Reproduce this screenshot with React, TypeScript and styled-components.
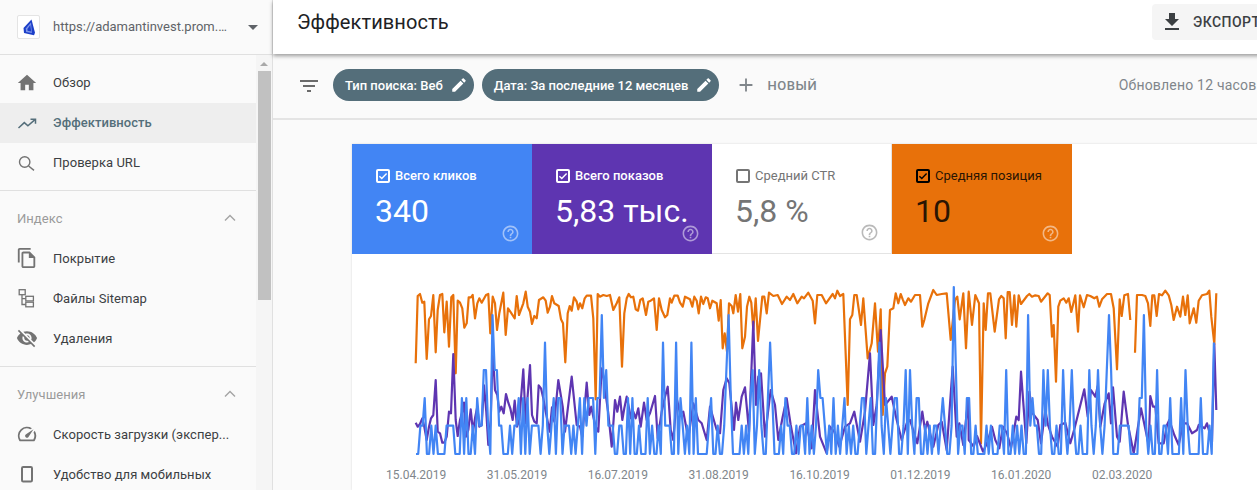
import React from "react";
import styled, { createGlobalStyle } from "styled-components";

const Global = createGlobalStyle`
  html, body { margin: 0; padding: 0; background: #fff; overflow: hidden; }
  body { font-family: Roboto, "Liberation Sans", sans-serif; }
`;

const Page = styled.div`
  display: flex;
  width: 1257px;
  height: 490px;
  overflow: hidden;
`;

/* ---------- sidebar ---------- */
const Sidebar = styled.aside`
  flex: 0 0 272px;
  width: 272px;
  height: 490px;
  display: flex;
  flex-direction: column;
  background: #fafafa;
  border-right: 1px solid #e0e0e0;
`;
const SiteHeader = styled.div`
  flex: 0 0 54px;
  height: 54px;
  display: flex;
  align-items: center;
  padding-left: 17px;
  border-bottom: 1px solid #e0e0e0;
`;
const LogoBox = styled.div`
  width: 21px;
  height: 22px;
  margin-right: 13px;
  display: flex;
  align-items: center;
  justify-content: center;
  background: #fff;
  border: 1px solid #e4e4e4;
  border-radius: 2px;
`;
const SiteName = styled.div`
  width: 175px;
  font-size: 13px;
  line-height: 18px;
  color: #5f6368;
  white-space: nowrap;
  overflow: hidden;
  text-overflow: ellipsis;
`;
const Caret = styled.div`
  width: 0;
  height: 0;
  margin-left: 20px;
  border-left: 5px solid transparent;
  border-right: 5px solid transparent;
  border-top: 5px solid #5f6368;
`;
const SideBody = styled.div`
  flex: 1;
  display: flex;
  min-height: 0;
`;
const Nav = styled.nav`
  flex: 0 0 256px;
  width: 256px;
  padding-top: 8px;
  overflow: hidden;
`;
const NavItem = styled.div<{ $active?: boolean }>`
  height: 40px;
  display: flex;
  align-items: center;
  padding-left: 16px;
  gap: 15px;
  font-size: 13px;
  letter-spacing: 0.05px;
  white-space: nowrap;
  color: ${(p) => (p.$active ? "#546e7a" : "#3c4043")};
  font-weight: ${(p) => (p.$active ? 500 : 400)};
  background: ${(p) => (p.$active ? "#eeeeee" : "transparent")};
  svg { flex: 0 0 22px; color: ${(p) => (p.$active ? "#546e7a" : "#737373")}; }
`;
const NavLabel = styled.span``;
const PrimaryGroup = styled.div`
  ${NavLabel} { margin-top: -2px; }
`;
const Divider = styled.div<{ $gap: number }>`
  height: 1px;
  margin-top: ${(p) => p.$gap}px;
  background: #e0e0e0;
`;
const SectionTitle = styled.div`
  height: 54px;
  display: flex;
  align-items: center;
  justify-content: space-between;
  padding: 0 20px 0 17px;
  box-sizing: border-box;
  font-size: 13px;
  letter-spacing: 0.05px;
  color: #9a9a9a;
  margin-bottom: -7px;
`;
const ScrollTrack = styled.div`
  flex: 0 0 16px;
  width: 16px;
  background: #f5f5f5;
  display: flex;
  flex-direction: column;
  align-items: center;
`;
const ScrollArrow = styled.div`
  width: 0;
  height: 0;
  margin-top: 7px;
  border-left: 4px solid transparent;
  border-right: 4px solid transparent;
  border-bottom: 4px solid #a8a8a8;
`;
const ScrollThumb = styled.div`
  width: 13px;
  height: 229px;
  margin-top: 5px;
  background: #c1c1c1;
`;

/* ---------- main ---------- */
const Main = styled.main`
  flex: 0 0 1040px;
  width: 1040px;
  display: flex;
  flex-direction: column;
  background: #fafafa;
`;
const TopBar = styled.header`
  position: relative;
  z-index: 2;
  flex: 0 0 54px;
  height: 54px;
  display: flex;
  align-items: center;
  justify-content: space-between;
  box-sizing: border-box;
  padding: 0 24px 10px;
  background: #fff;
  box-shadow: 0 2px 4px rgba(0, 0, 0, 0.38);
`;
const Title = styled.h1`
  margin: 0;
  font-size: 20px;
  font-weight: 400;
  color: #202124;
  letter-spacing: 0.1px;
`;
const ExportButton = styled.button`
  width: 137px;
  height: 36px;
  display: flex;
  align-items: center;
  gap: 9px;
  padding: 0 0 0 8px;
  border: 0;
  border-radius: 4px;
  background: #f5f5f5;
  color: #3c4043;
  font-family: inherit;
  font-size: 14px;
  font-weight: 500;
  letter-spacing: 0.45px;
`;
const FilterBar = styled.div`
  flex: 0 0 66px;
  height: 66px;
  display: flex;
  align-items: center;
  box-sizing: border-box;
  padding-left: 24px;
  border-bottom: 2px solid #e4e4e4;
  color: #6b6b6b;
`;
const FilterIcon = styled.div`
  width: 24px;
  height: 24px;
  margin-right: 12px;
  margin-top: -1px;
  color: #6b6b6b;
`;
const Chip = styled.div`
  height: 32px;
  display: flex;
  align-items: center;
  gap: 7px;
  box-sizing: border-box;
  padding: 0 6px 0 12px;
  margin-right: 8px;
  margin-top: -2px;
  border-radius: 16px;
  background: #546e7a;
  color: #fff;
  font-size: 13px;
  font-weight: 500;
  white-space: nowrap;
`;
const NewFilter = styled.div`
  display: flex;
  align-items: center;
  gap: 10px;
  margin-left: 8px;
  margin-top: -2px;
  font-size: 13px;
  font-weight: 500;
  letter-spacing: 0.6px;
  color: #80868b;
`;
const Updated = styled.div`
  margin-left: auto;
  margin-right: 13px;
  margin-top: -2px;
  font-size: 14px;
  letter-spacing: 0.2px;
  color: #80868b;
  white-space: nowrap;
`;
const Content = styled.div`
  flex: 1;
  padding: 24px 0 0 79px;
`;
const Card = styled.section`
  background: #fff;
  box-shadow: 0 0 2px rgba(0, 0, 0, 0.14);
  height: 100%;
`;
const Tiles = styled.div`
  display: flex;
  height: 110px;
`;
const Tile = styled.div<{ $bg: string; $fg: string; $light?: boolean }>`
  position: relative;
  flex: 0 0 180px;
  width: 180px;
  height: 110px;
  box-sizing: border-box;
  padding: 23px 0 0 24px;
  background: ${(p) => p.$bg};
  color: ${(p) => p.$fg};
  border-bottom: ${(p) => (p.$light ? "1px solid #e4e4e4" : "0")};
  border-right: ${(p) => (p.$light ? "1px solid #e4e4e4" : "0")};
`;
const TileHead = styled.div`
  display: flex;
  align-items: center;
  gap: 5px;
  height: 16px;
  font-size: 13px;
  font-weight: 500;
  white-space: nowrap;
  svg { margin-top: 2px; }
`;
const TileHeadLight = styled(TileHead)`
  font-weight: 400;
`;
const TileValue = styled.div`
  margin: 9px 0 0 -1px;
  font-size: 32px;
  line-height: 38px;
  font-weight: 400;
  white-space: nowrap;
`;
const HelpIcon = styled.div<{ $color?: string }>`
  position: absolute;
  right: 12px;
  bottom: 11px;
  width: 19px;
  height: 19px;
  opacity: 0.5;
  color: ${(p) => p.$color || "inherit"};
`;
const ChartFrame = styled.div`
  display: block;
  height: 206px;
`;
const Axis = styled.div`
  display: flex;
  padding-left: 34px;
  height: 30px;
  align-items: center;
`;
const Tick = styled.div`
  flex: 0 0 100.85px;
  font-size: 12px;
  color: #80868b;
  white-space: nowrap;
`;

/* ---------- icons ---------- */
const Icon = ({ d, size = 22 }: { d: string; size?: number }) => (
  <svg width={size} height={size} viewBox="0 0 24 24" fill="currentColor">
    <path d={d} />
  </svg>
);
const P = {
  home: "M10 20v-6h4v6h5v-8h3L12 3 2 12h3v8z",
  copy: "M16 1H4c-1.1 0-2 .9-2 2v14h2V3h12V1zm-1 4H8c-1.1 0-1.99.9-1.99 2L6 21c0 1.1.89 2 1.99 2H19c1.1 0 2-.9 2-2V11l-6-6zM8 21V7h6v5h5v9H8z",
  eyeOff:
    "M12 7c2.76 0 5 2.24 5 5 0 .65-.13 1.26-.36 1.83l2.92 2.92c1.51-1.26 2.7-2.89 3.43-4.75-1.73-4.39-6-7.5-11-7.5-1.4 0-2.74.25-3.98.7l2.16 2.16C10.74 7.13 11.35 7 12 7zM2 4.27l2.28 2.28.46.46C3.08 8.3 1.78 10.02 1 12c1.73 4.39 6 7.5 11 7.5 1.55 0 3.03-.3 4.38-.84l.42.42L19.73 22 21 20.73 3.27 3 2 4.27zM7.53 9.8l1.55 1.55c-.05.21-.08.43-.08.65 0 1.66 1.34 3 3 3 .22 0 .44-.03.65-.08l1.55 1.55c-.67.33-1.41.53-2.2.53-2.76 0-5-2.24-5-5 0-.79.2-1.53.53-2.2zm4.31-.78l3.15 3.15.02-.16c0-1.66-1.34-3-3-3l-.17.01z",
  speed:
    "M20.38 8.57l-1.23 1.85a8 8 0 0 1-.22 7.58H5.07A8 8 0 0 1 15.58 6.85l1.85-1.23A10 10 0 0 0 3.35 19a2 2 0 0 0 1.72 1h13.85a2 2 0 0 0 1.74-1 10 10 0 0 0-.27-10.44zm-9.79 6.84a2 2 0 0 0 2.83 0l5.66-8.49-8.49 5.66a2 2 0 0 0 0 2.83z",
  pencil:
    "M3 17.25V21h3.75L17.81 9.94l-3.75-3.75L3 17.25zM20.71 7.04c.39-.39.39-1.02 0-1.41l-2.34-2.34c-.39-.39-1.02-.39-1.41 0l-1.83 1.83 3.75 3.75 1.83-1.83z",
  filter: "M10 18h4v-2h-4v2zM3 6v2h18V6H3zm3 7h12v-2H6v2z",
  add: "M19 13h-6v6h-2v-6H5v-2h6V5h2v6h6v2z",
  download: "M19 9h-4V3H9v6H5l7 7 7-7zM5 18v2h14v-2H5z",
  help: "M11 18h2v-2h-2v2zm1-16C6.48 2 2 6.48 2 12s4.48 10 10 10 10-4.48 10-10S17.52 2 12 2zm0 18c-4.41 0-8-3.59-8-8s3.59-8 8-8 8 3.59 8 8-3.59 8-8 8zm0-14c-2.21 0-4 1.79-4 4h2c0-1.1.9-2 2-2s2 .9 2 2c0 2-3 1.75-3 5h2c0-2.25 3-2.5 3-5 0-2.21-1.79-4-4-4z",
};

const TrendIcon = () => (
  <svg width="22" height="22" viewBox="0 0 22 22" fill="none" stroke="currentColor" strokeWidth="1.5">
    <path d="M2.5 16l5.8-5.4 3.6 3.2L19 7.6" />
    <path d="M14.5 7.2h5v4.6" />
  </svg>
);
const SearchIcon = () => (
  <svg width="22" height="22" viewBox="0 0 22 22" fill="none" stroke="currentColor" strokeWidth="1.4">
    <circle cx="8.7" cy="10" r="5.2" />
    <path d="M12.6 14l5.4 4.4" />
  </svg>
);
const SitemapIcon = () => (
  <svg width="22" height="22" viewBox="0 0 22 22" fill="none" stroke="currentColor" strokeWidth="1.3">
    <rect x="3.2" y="2.7" width="6" height="5" />
    <rect x="9.8" y="9.3" width="7.6" height="4.6" />
    <rect x="9.8" y="15.2" width="7.6" height="4.6" />
    <path d="M6 8v9.5h3.8M6 11.6h3.8" />
  </svg>
);
const PhoneIcon = () => (
  <svg width="22" height="22" viewBox="0 0 22 22" fill="none" stroke="currentColor" strokeWidth="2">
    <rect x="6" y="4" width="10" height="14.5" rx="1.2" />
  </svg>
);
const Chevron = () => (
  <svg width="12" height="8" viewBox="0 0 12 8" fill="none" stroke="#a3a3a3" strokeWidth="1.4">
    <path d="M1 6.5l5-5 5 5" />
  </svg>
);
const Logo = () => (
  <svg width="14" height="17" viewBox="0 0 14 17">
    <path d="M9.5 0.5L1.5 9l.5 5 10 2.2 1-2.5z" fill="#1c3fc8" />
    <path d="M9 3.5L3.8 9.5l.3 3.4 5.8 1.2z" fill="#7d95ea" />
    <path d="M8.3 6L5.4 10l.2 1.7 3.6.8z" fill="#1c3fc8" />
  </svg>
);
const Check = ({ color, checked }: { color: string; checked: boolean }) => (
  <svg width="14" height="14" viewBox="0 0 14 14" fill="none">
    <rect x="1" y="1" width="12" height="12" rx="1" stroke={color} strokeWidth="2" />
    {checked && <path d="M3.4 7.2l2.4 2.4 4.8-5" stroke={color} strokeWidth="1.4" />}
  </svg>
);

/* ---------- chart data: points read off the reference, as crop-space pairs ---------- */
type Pt = [number, number];
const crop = (ox: number, raw: number[]): Pt[] => {
  const out: Pt[] = [];
  for (let i = 0; i < raw.length; i += 2) out.push([ox + raw[i] / 3 - 352, 26 + raw[i + 1] / 3]);
  return out;
};
const orangeA = [
  ...crop(380, [107,250,113,48,120,42,127,68,133,65,140,237,147,118,153,108,160,45,167,217,173,90,180,45,187,42,193,157,200,65,207,200,214,52,220,45,227,280,233,62,240,68,247,85,253,143,260,130,266,52,273,52,278,45,285,115,292,70,298,55,305,68,318,45,325,42,331,160,338,50,345,70,351,150,358,100,370,38,377,165,384,85,391,95,404,115,410,48,417,105,430,70,437,35,443,80,450,95,456,132,463,108,470,115,477,60,490,52,497,62,503,98,510,80,516,48,523,70,536,78,543,118,549,130,556,247,563,100,569,78,575,92,582,52,590,65,595,88,600,70,607,85,614,55,620,47,633,47,640,115,647,358,653,42,660,50,670,45,680,48,690,45,700,90,710,70,718,52,726,260,733,100,740,55,746,42,753,52,760,50,767,88,774,92,781,60,788,55,798,105,805,65,812,62,822,55,830,150,837,55,845,90,855,112,862,105,870,55,875,68,883,47,893,47,900,68]),
  ...crop(680, [8,80,15,50,30,58,37,80,43,50,50,62,56,100,63,50,70,72,77,52,83,55,90,85,97,62,110,70,116,122,122,60,128,205,134,160,141,215,147,70,155,78,160,100,167,45,174,95,181,42,187,205,195,170,201,80,208,50,214,68,220,150,227,55,234,183,247,50,253,50,260,100,267,38,280,48,293,45,306,72,320,50,330,60,340,42,352,70,365,50,372,55,385,38,398,62,405,130,412,45,425,45,438,70,458,42,465,55,472,32,480,48,490,42,503,375,510,118,517,105,523,45,530,45,543,135,550,55,563,235,575,190,585,70,594,215,602,88,608,405,615,280,622,260,630,90,640,85,647,40,655,70,662,42,668,58,675,75,685,55,693,65,705,45,720,45,727,140,733,120,745,70,760,30,770,45,785,42,800,40,812,180,825,60,832,50,839,118,850,40,858,205,866,35]),
  ...crop(967, [15,135,25,45,36,70,42,490,50,70,56,150,63,40,70,40,83,155,96,58,103,48,110,55,116,175,122,36,128,36,135,135,142,46,148,140,155,46,162,72,180,48,187,42,195,50,205,46,215,48,222,65,242,40,248,45,255,170,260,135,267,305,274,80,280,62,290,55,298,68,305,55,313,96,325,46,333,155,339,46,350,82,360,45,370,48,382,55,390,50,397,80,405,58,420,42,432,42,440,85,450,268,458,58,464,108,472,46,483,42,490,120]),
];
const orangeB = crop(967, [504,218,510,45,525,45,535,48,543,70,550,138,556,46,562,46,569,108,576,42,585,46,595,32,605,46,613,75,620,120,630,80,640,110,648,50,655,105,662,46,668,130,680,85,688,128,695,62,705,46,720,42,727,32,733,110,742,192,748,40]);
const purple = [
  ...crop(380, [107,428,113,440,120,432,127,415,133,440,140,480,147,440,153,415,160,405,167,300,173,455,180,460,187,488,193,488,200,470,207,395,213,400,220,222,227,420,233,468,240,420,247,395,252,368,258,470,265,450,272,388,279,455,285,415,292,380,298,440,305,435,312,316,319,395,325,495,332,420,338,210,345,330,352,345,358,395,364,380,371,400,378,342,385,368,391,385,398,420,404,362,411,440,418,420,430,268,437,430,443,345,450,255,456,405,463,425,470,430,476,316,483,325,490,355,497,395,509,455,516,382,523,425,535,300,548,380,555,455,575,290,590,435,600,440,607,470,620,308,628,405,634,380,640,410,647,440,655,455,665,265,672,300,678,350,685,400,695,500,705,360,712,395,720,350,727,420,733,385,740,350,753,415,760,395,767,415,775,385,782,440,792,368,800,420,810,400,825,348,833,475,845,395,855,350,863,320,872,450,880,480,890,355,900,400]),
  ...crop(680, [10,395,25,475,40,370,55,420,65,430,80,480,90,380,110,450,120,460,130,330,140,295,148,310,162,450,168,368,175,420,185,350,195,322,207,455,220,125,228,375,235,290,243,280,255,470,272,330,285,375,295,480,308,410,320,355,332,435,348,520,360,440,378,430,395,505,405,330,420,470,440,520,450,440,463,455,478,500,495,440,510,430,523,395,540,485,555,395,570,220,580,435,590,375,602,150,615,375,635,350,650,420,665,480,680,430,690,420,712,490,727,395,735,450,742,425,760,500,775,435,785,425,800,510,818,260,830,470,838,430,850,495,865,355]),
  ...crop(967, [5,480,20,500,30,468,48,515,60,490,75,440,85,480,97,505,108,440,120,460,132,505,148,410,155,420,162,275,178,490,187,335,197,400,212,420,222,490,235,390,243,435,255,470,272,500,280,435,295,428,310,490,322,448,352,328,362,410,372,330,385,350,392,318,400,440,413,370,425,340,432,430,438,322,450,470,458,485,470,335,483,435,500,520,522,385,545,495,550,348,558,380,565,380,575,490,590,490,600,435,607,420,622,465,635,495,648,430,660,430,675,460,690,450,695,435,713,445,720,430,735,485,742,192,748,390]),
];
const clickLevels =
  "0011200101" + "0000111100" + "0202001021" + "1331053311" + "0001011202" + "0201111014" +
  "1012022011" + "1010120212" + "2202252311" + "1001100202" + "0010002010" + "0104111004" +
  "0210104020" + "0000120010" + "0135200001" + "0102301310" + "0242000102" + "1100101102" +
  "0101322101" + "0201012010" + "1001220120" + "0241021012" + "2001303102" + "2001010110" +
  "1210016301" + "1022001000" + "0101000110" + "3001010100" + "5121100313" + "1001003101" +
  "3100100031" + "0131013530" + "0011111000" + "0225101003" + "0011020000" + "2031000002" + "000104";
const levelY = [200, 171.7, 144, 116, 88.5, 61, 33];
const blue: Pt[] = clickLevels.split("").map((c, d) => [64 + d * 2.186, levelY[Number(c)]]);
const toPoints = (pts: Pt[]) => pts.map((p) => `${p[0].toFixed(1)},${p[1].toFixed(1)}`).join(" ");

const Series = ({ pts, color }: { pts: Pt[]; color: string }) => (
  <polyline points={toPoints(pts)} fill="none" stroke={color} strokeWidth="2.2" strokeLinejoin="round" />
);

const ticks = ["15.04.2019", "31.05.2019", "16.07.2019", "31.08.2019", "16.10.2019", "01.12.2019", "16.01.2020", "02.03.2020"];

export default function App() {
  return (
    <Page>
      <Global />
      <Sidebar>
        <SiteHeader>
          <LogoBox><Logo /></LogoBox>
          <SiteName>https://adamantinvest.prom.ua/</SiteName>
          <Caret />
        </SiteHeader>
        <SideBody>
          <Nav>
            <PrimaryGroup>
              <NavItem><Icon d={P.home} /><NavLabel>Обзор</NavLabel></NavItem>
              <NavItem $active><TrendIcon /><NavLabel>Эффективность</NavLabel></NavItem>
              <NavItem><SearchIcon /><NavLabel>Проверка URL</NavLabel></NavItem>
            </PrimaryGroup>
            <Divider $gap={7} />
            <SectionTitle>Индекс<Chevron /></SectionTitle>
            <NavItem><Icon d={P.copy} /><NavLabel>Покрытие</NavLabel></NavItem>
            <NavItem><SitemapIcon /><NavLabel>Файлы Sitemap</NavLabel></NavItem>
            <NavItem><Icon d={P.eyeOff} /><NavLabel>Удаления</NavLabel></NavItem>
            <Divider $gap={8} />
            <SectionTitle>Улучшения<Chevron /></SectionTitle>
            <NavItem><Icon d={P.speed} /><NavLabel>Скорость загрузки (экспер...</NavLabel></NavItem>
            <NavItem><PhoneIcon /><NavLabel>Удобство для мобильных</NavLabel></NavItem>
          </Nav>
          <ScrollTrack>
            <ScrollArrow />
            <ScrollThumb />
          </ScrollTrack>
        </SideBody>
      </Sidebar>
      <Main>
        <TopBar>
          <Title>Эффективность</Title>
          <ExportButton><Icon d={P.download} size={24} />ЭКСПОРТ</ExportButton>
        </TopBar>
        <FilterBar>
          <FilterIcon><Icon d={P.filter} size={24} /></FilterIcon>
          <Chip>Тип поиска: Веб<Icon d={P.pencil} size={18} /></Chip>
          <Chip>Дата: За последние 12 месяцев<Icon d={P.pencil} size={18} /></Chip>
          <NewFilter><Icon d={P.add} size={22} />НОВЫЙ</NewFilter>
          <Updated>Обновлено 12 часов назад</Updated>
        </FilterBar>
        <Content>
          <Card>
            <Tiles>
              <Tile $bg="#4285f4" $fg="#fff">
                <TileHead><Check color="#fff" checked />Всего кликов</TileHead>
                <TileValue>340</TileValue>
                <HelpIcon><Icon d={P.help} size={19} /></HelpIcon>
              </Tile>
              <Tile $bg="#5e35b1" $fg="#fff">
                <TileHead><Check color="#fff" checked />Всего показов</TileHead>
                <TileValue>5,83 тыс.</TileValue>
                <HelpIcon><Icon d={P.help} size={19} /></HelpIcon>
              </Tile>
              <Tile $bg="#fff" $fg="#757575" $light>
                <TileHeadLight><Check color="#757575" checked={false} />Средний CTR</TileHeadLight>
                <TileValue>5,8 %</TileValue>
                <HelpIcon><Icon d={P.help} size={19} /></HelpIcon>
              </Tile>
              <Tile $bg="#e8710a" $fg="#2a1503">
                <TileHeadLight><Check color="#000" checked />Средняя позиция</TileHeadLight>
                <TileValue>10</TileValue>
                <HelpIcon $color="#fff"><Icon d={P.help} size={19} /></HelpIcon>
              </Tile>
            </Tiles>
            <ChartFrame>
              <svg width="905" height="206" viewBox="0 0 905 206">
                <Series pts={orangeA} color="#e8710a" />
                <Series pts={orangeB} color="#e8710a" />
                <Series pts={purple} color="#5e35b1" />
                <Series pts={blue} color="#4285f4" />
              </svg>
            </ChartFrame>
            <Axis>
              {ticks.map((t) => <Tick key={t}>{t}</Tick>)}
            </Axis>
          </Card>
        </Content>
      </Main>
    </Page>
  );
}
